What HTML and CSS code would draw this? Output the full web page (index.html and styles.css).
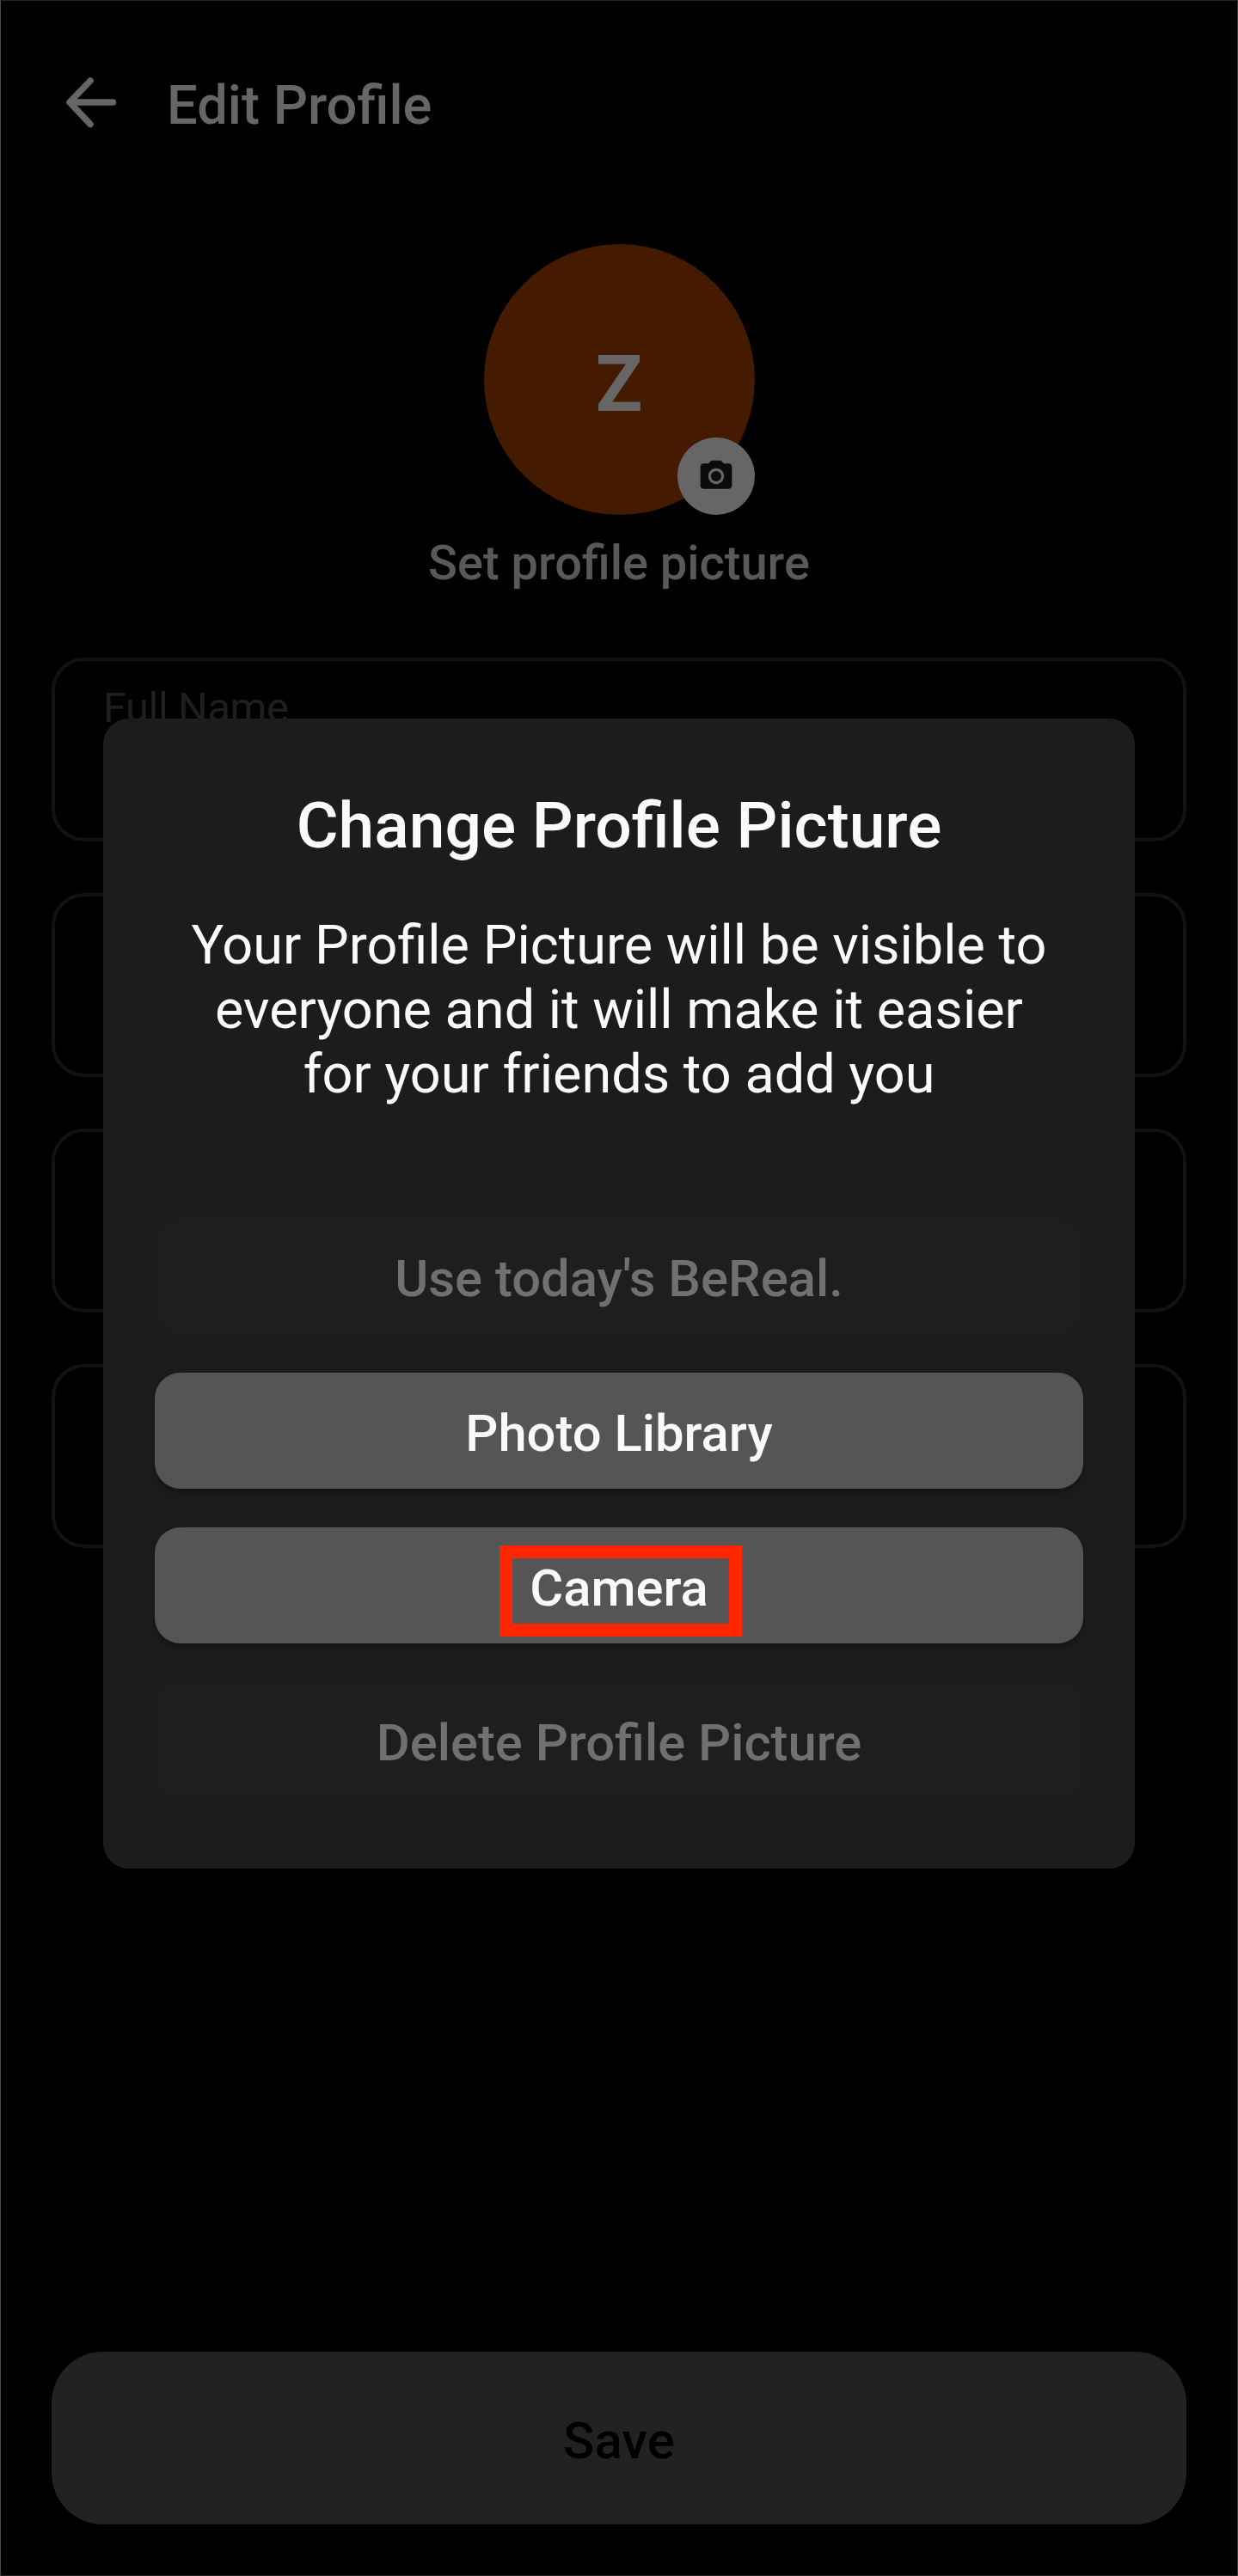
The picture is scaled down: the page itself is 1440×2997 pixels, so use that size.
FILE: index.html
```html
<!DOCTYPE html>
<html lang="en">
<head>
<meta charset="utf-8">
<title>Edit Profile</title>
<link rel="stylesheet" href="styles.css">
</head>
<body>
<div class="screen">
  <header class="topbar">
    <svg class="back" width="66" height="66" viewBox="0 0 66 66" aria-label="Back">
      <path d="M58.500 33H8M32 8 8 33l24 25.500" fill="none" stroke="currentColor" stroke-width="7.500" stroke-linecap="round" stroke-linejoin="round"/>
    </svg>
    <h1 class="topbar-title">Edit Profile</h1>
  </header>
  <section class="picture">
    <div class="avatar">
      <span>Z</span>
      <div class="badge">
        <svg width="44" height="44" viewBox="0 0 24 24">
          <circle cx="12" cy="12" r="3.300" fill="#0b0b0b"/>
          <path fill="#0b0b0b" d="M9 2 7.170 4H4c-1.100 0-2 .9-2 2v12c0 1.100.9 2 2 2h16c1.100 0 2-.9 2-2V6c0-1.100-.9-2-2-2h-3.170L15 2H9zm3 15c-2.760 0-5-2.240-5-5s2.240-5 5-5 5 2.240 5 5-2.240 5-5 5z"/>
        </svg>
      </div>
    </div>
    <p class="picture-label">Set profile picture</p>
  </section>
  <main class="fields">
    <div class="field">Full Name</div>
    <div class="field"></div>
    <div class="field"></div>
    <div class="field"></div>
  </main>
  <button class="save">Save</button>

  <div class="modal" role="dialog">
    <h2 class="modal-title">Change Profile Picture</h2>
    <p class="modal-text">Your Profile Picture will be visible to<br>everyone and it will make it easier<br>for your friends to add you</p>
    <div class="actions">
      <button class="action disabled">Use today's BeReal.</button>
      <button class="action">Photo Library</button>
      <button class="action">Camera<span class="highlight"></span></button>
      <button class="action disabled">Delete Profile Picture</button>
    </div>
  </div>
</div>
</body>
</html>
```
FILE: styles.css
```css
* { box-sizing: border-box; margin: 0; padding: 0; }
body { background: #000; font-family: Roboto, "Liberation Sans", sans-serif; }
button { border: 0; font-family: inherit; }
.screen {
  position: relative;
  display: flex;
  flex-direction: column;
  width: 1440px;
  height: 2997px;
  padding: 0 59px 59px;
  background: #000;
  border: 1px solid #232525;
  border-left-color: #4a4c4c;
  border-right-color: #3a3a3a;
}
.topbar {
  display: flex;
  align-items: flex-start;
  height: 283px;
  padding: 84px 0 0 13px;
  color: #666;
}
.back { margin-top: 1px; }
.topbar-title {
  margin-left: 55px;
  font-size: 63.25px;
  font-weight: 500;
  line-height: 75px;
}
.picture { display: flex; flex-direction: column; align-items: center; height: 481px; }
.avatar {
  position: relative;
  display: flex;
  align-items: center;
  justify-content: center;
  width: 315px;
  height: 315px;
  padding-top: 12px;
  border-radius: 50%;
  background: #441a00;
  color: #666;
  font-size: 90px;
  font-weight: 700;
}
.badge {
  position: absolute;
  right: 0;
  bottom: 0;
  display: flex;
  align-items: center;
  justify-content: center;
  width: 90px;
  height: 90px;
  border-radius: 50%;
  background: #666;
}
.picture-label {
  margin-top: 23px;
  color: #595959;
  font-size: 56px;
  font-weight: 500;
  line-height: 66px;
}
.fields { display: flex; flex-direction: column; gap: 60px; }
.field {
  height: 214px;
  padding: 26px 56px;
  border: 4px solid #121212;
  border-radius: 38px;
  color: #1f1f1f;
  font-size: 48.75px;
  letter-spacing: -.4px;
  line-height: 57px;
}
.save {
  height: 201px;
  margin-top: auto;
  padding-top: 6px;
  border-radius: 60px;
  background: #222;
  color: #000;
  font-size: 60px;
  font-weight: 500;
}
.modal {
  position: absolute;
  top: 835px;
  left: 119px;
  width: 1200px;
  height: 1338px;
  padding: 80px 60px 82px;
  border-radius: 30px;
  background: #1c1c1e;
  color: #fafafa;
  text-align: center;
}
.modal-title { font-size: 75px; font-weight: 500; line-height: 88px; }
.modal-text { margin-top: 58px; font-size: 63px; line-height: 75px; }
.actions { display: flex; flex-direction: column; gap: 45px; margin-top: 130px; }
.action {
  position: relative;
  height: 135px;
  padding-top: 6px;
  border-radius: 30px;
  background: #555557;
  box-shadow: 0 4px 10px rgba(0, 0, 0, .3);
  color: #fafafa;
  font-size: 59.75px;
  font-weight: 500;
}
.disabled { background: #1e1e1e; box-shadow: none; color: #707070; }
.highlight {
  position: absolute;
  top: 21px;
  left: 401px;
  width: 282px;
  height: 106px;
  border: 15px solid #ff2600;
}
```
